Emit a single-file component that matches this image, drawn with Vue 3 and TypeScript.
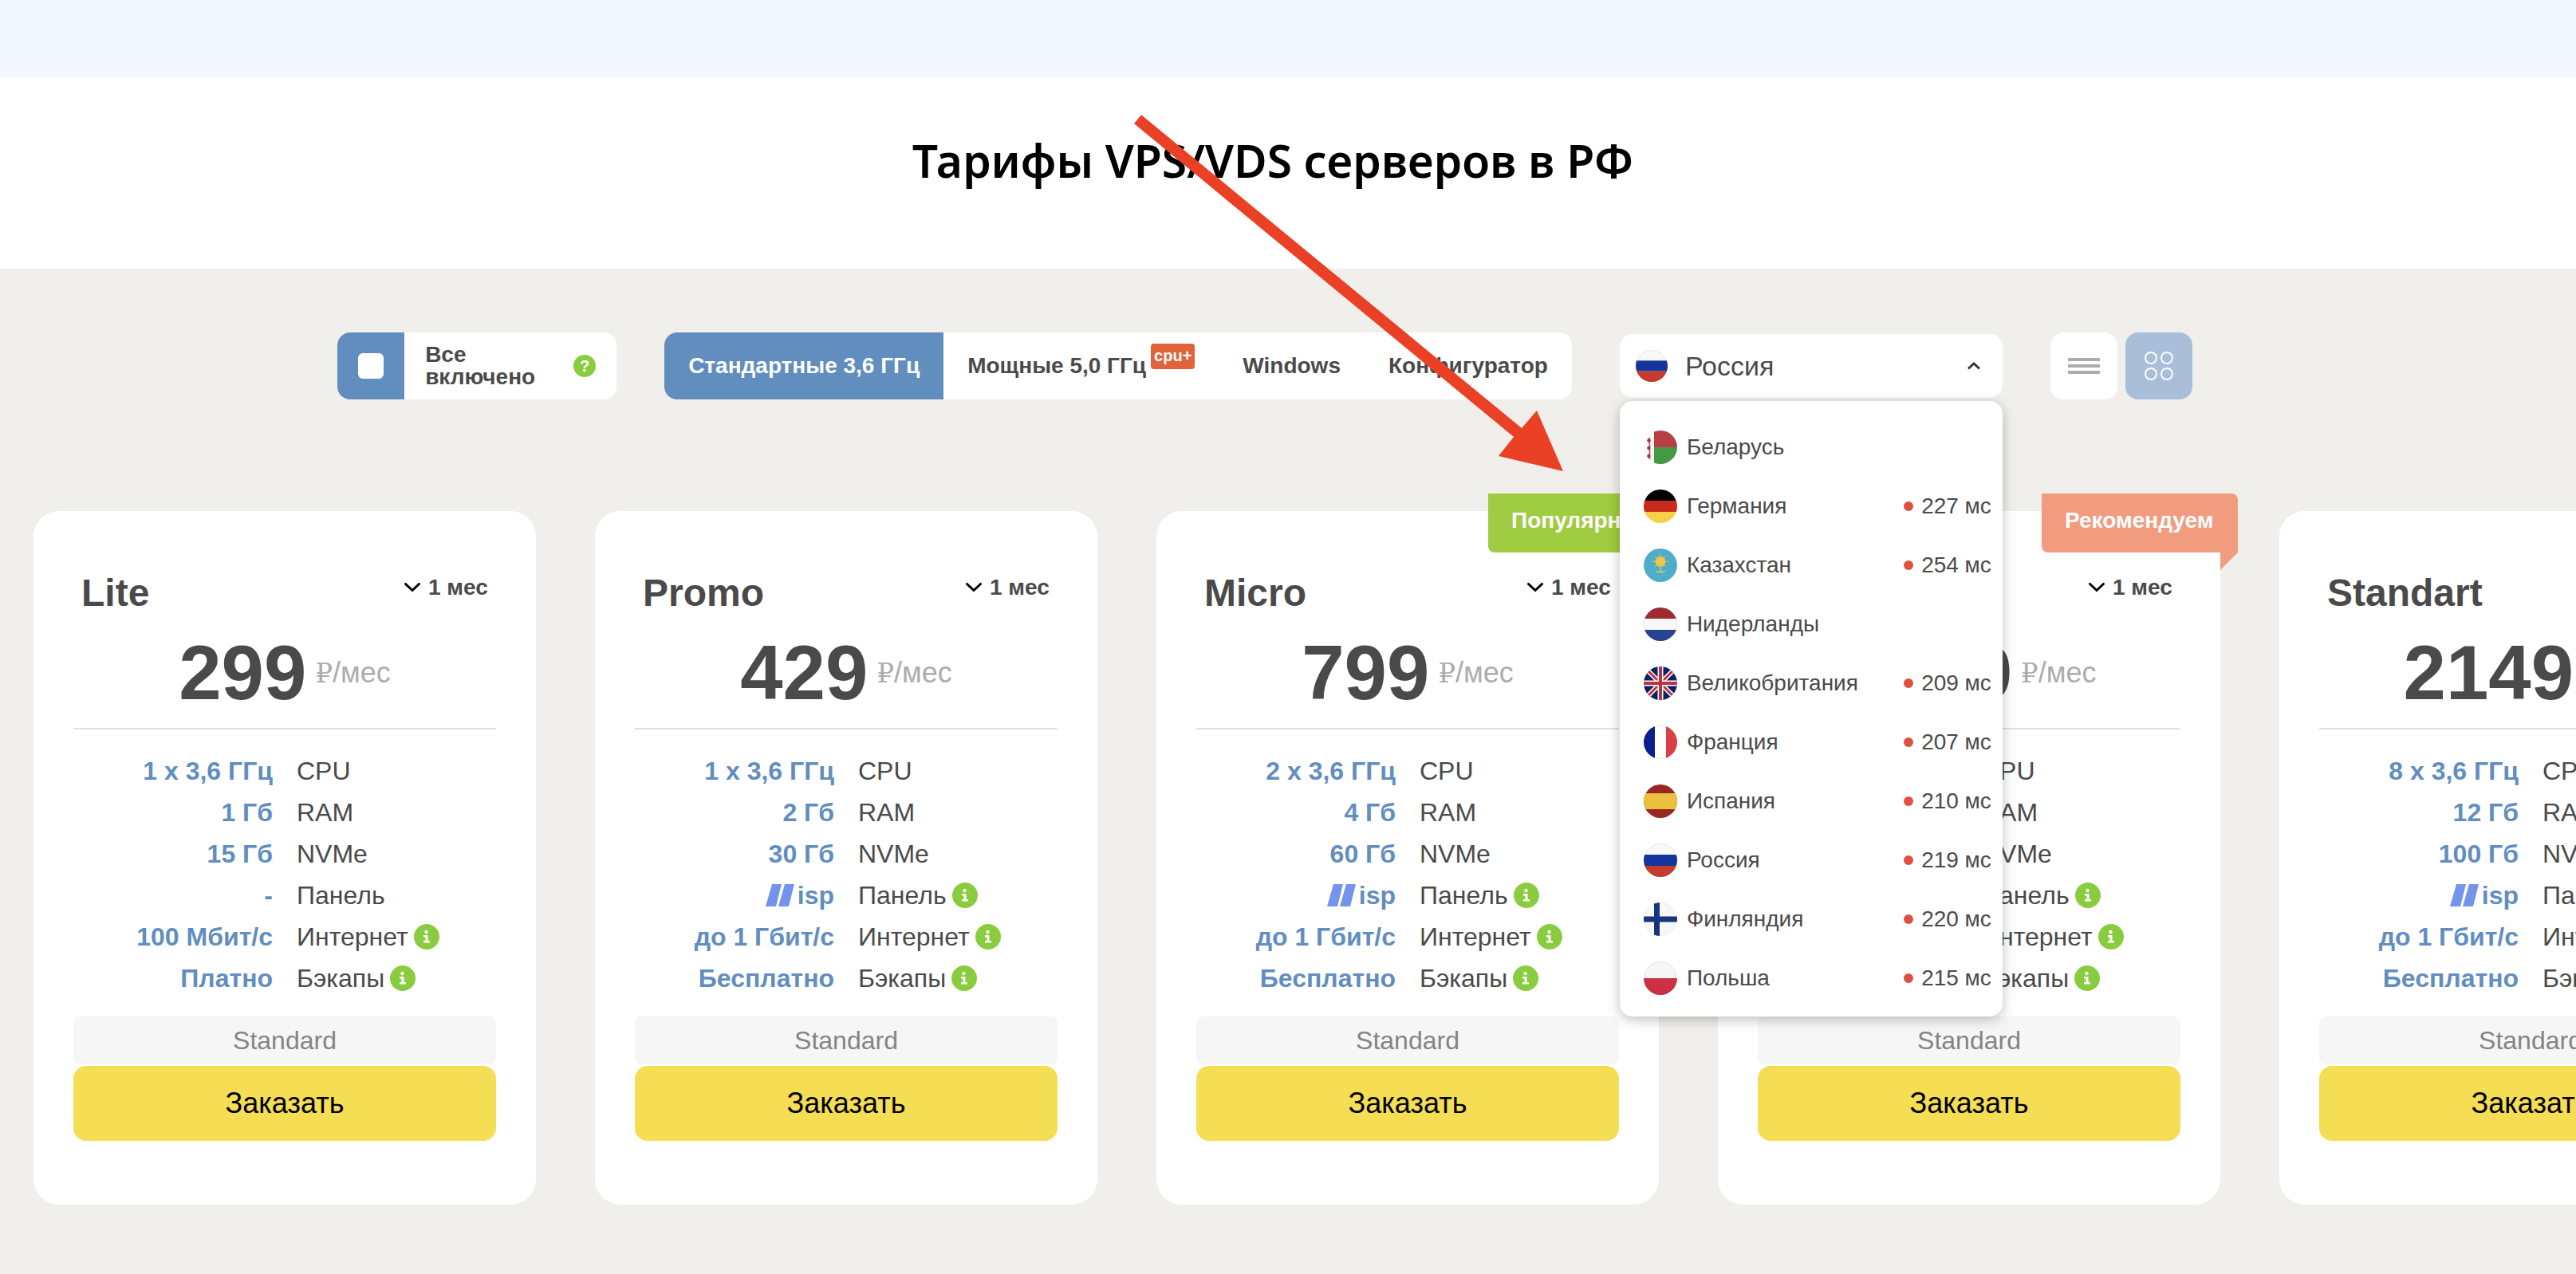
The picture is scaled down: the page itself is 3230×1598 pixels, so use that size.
<script setup lang="ts">
import { ref } from 'vue'

interface Country {
  code: string
  name: string
  ping?: number
}

interface Spec {
  label: string
  value: string
  logo?: boolean
  info?: boolean
}

interface Plan {
  name: string
  price: number
  specs: Spec[]
  ribbon?: { text: string; tone: string }
}

const tabs = [
  { id: 'std', label: 'Стандартные 3,6 ГГц' },
  { id: 'fast', label: 'Мощные 5,0 ГГц', badge: 'cpu+' },
  { id: 'win', label: 'Windows' },
  { id: 'conf', label: 'Конфигуратор' },
]

const countries: Country[] = [
  { code: 'by', name: 'Беларусь' },
  { code: 'de', name: 'Германия', ping: 227 },
  { code: 'kz', name: 'Казахстан', ping: 254 },
  { code: 'nl', name: 'Нидерланды' },
  { code: 'gb', name: 'Великобритания', ping: 209 },
  { code: 'fr', name: 'Франция', ping: 207 },
  { code: 'es', name: 'Испания', ping: 210 },
  { code: 'ru', name: 'Россия', ping: 219 },
  { code: 'fi', name: 'Финляндия', ping: 220 },
  { code: 'pl', name: 'Польша', ping: 215 },
]

function paidSpecs(cores: number, ram: number, disk: number): Spec[] {
  return [
    { label: 'CPU', value: `${cores} x 3,6 ГГц` },
    { label: 'RAM', value: `${ram} Гб` },
    { label: 'NVMe', value: `${disk} Гб` },
    { label: 'Панель', value: 'isp', logo: true, info: true },
    { label: 'Интернет', value: 'до 1 Гбит/с', info: true },
    { label: 'Бэкапы', value: 'Бесплатно', info: true },
  ]
}

const plans: Plan[] = [
  {
    name: 'Lite',
    price: 299,
    specs: [
      { label: 'CPU', value: '1 x 3,6 ГГц' },
      { label: 'RAM', value: '1 Гб' },
      { label: 'NVMe', value: '15 Гб' },
      { label: 'Панель', value: '-' },
      { label: 'Интернет', value: '100 Мбит/с', info: true },
      { label: 'Бэкапы', value: 'Платно', info: true },
    ],
  },
  { name: 'Promo', price: 429, specs: paidSpecs(1, 2, 30) },
  {
    name: 'Micro',
    price: 799,
    specs: paidSpecs(2, 4, 60),
    ribbon: { text: 'Популярный', tone: 'green' },
  },
  {
    name: 'Medium',
    price: 1499,
    specs: paidSpecs(4, 8, 80),
    ribbon: { text: 'Рекомендуем', tone: 'coral' },
  },
  { name: 'Standart', price: 2149, specs: paidSpecs(8, 12, 100) },
]

const activeTab = ref('std')
const country = ref<Country>(countries[7])
const open = ref(true)
const allInclusive = ref(false)
const view = ref<'list' | 'grid'>('grid')

function pick(item: Country) {
  country.value = item
  open.value = false
}
</script>

<template>
  <div class="page">
    <svg class="sprite" aria-hidden="true">
      <defs>
        <clipPath id="disc"><circle cx="21" cy="21" r="21" /></clipPath>
        <symbol id="flag-by" viewBox="0 0 42 42">
          <g clip-path="url(#disc)">
            <rect width="42" height="42" fill="#f7f5f5" />
            <rect x="13" width="29" height="21" fill="#b73e45" />
            <rect x="13" y="21" width="29" height="21" fill="#439944" />
            <path d="M7.500 9V36" stroke="#b5525c" stroke-width="1.500" />
            <path d="M6 9.500l3 3-3 3-2-3zM6 19l3 3-3 3-2-3zM6 29l3 3-3 3-2-3z" fill="#a93246" />
          </g>
        </symbol>
        <symbol id="flag-de" viewBox="0 0 42 42">
          <g clip-path="url(#disc)">
            <rect width="42" height="14" fill="#000" />
            <rect y="14" width="42" height="14" fill="#c92a1d" />
            <rect y="28" width="42" height="14" fill="#f8d048" />
          </g>
        </symbol>
        <symbol id="flag-kz" viewBox="0 0 42 42">
          <g clip-path="url(#disc)">
            <rect width="42" height="42" fill="#50adc7" />
            <path d="M21 6v21M11 16.500h20M14 9.500l14 14M28 9.500l-14 14" stroke="#d9c766" stroke-width="1" />
            <circle cx="21" cy="16.500" r="6.500" fill="#f0c546" />
            <path d="M15 27.500c2 2 4 2 6 1 2 1 4 1 6-1M17 30h8M21 24v5" fill="none" stroke="#c9cc72" stroke-width="1.200" />
          </g>
        </symbol>
        <symbol id="flag-nl" viewBox="0 0 42 42">
          <g clip-path="url(#disc)">
            <rect width="42" height="42" fill="#f8f8f8" />
            <rect width="42" height="14" fill="#9f2b30" />
            <rect y="28" width="42" height="14" fill="#27458c" />
          </g>
          <circle cx="21" cy="21" r="20.500" fill="none" stroke="#000" stroke-opacity="0.080" />
        </symbol>
        <symbol id="flag-gb" viewBox="0 0 42 42">
          <g clip-path="url(#disc)">
            <rect width="42" height="42" fill="#0c2163" />
            <path d="M0 0L42 42M42 0L0 42" stroke="#fff" stroke-width="6" />
            <path d="M0 0L42 42M42 0L0 42" stroke="#b93242" stroke-width="3" />
            <path d="M21 0V42M0 21H42" stroke="#fff" stroke-width="7" />
            <path d="M21 0V42M0 21H42" stroke="#b93242" stroke-width="4" />
          </g>
        </symbol>
        <symbol id="flag-fr" viewBox="0 0 42 42">
          <g clip-path="url(#disc)">
            <rect width="42" height="42" fill="#fff" />
            <rect width="14" height="42" fill="#0b1f8f" />
            <rect x="28" width="14" height="42" fill="#db4045" />
          </g>
          <circle cx="21" cy="21" r="20.500" fill="none" stroke="#000" stroke-opacity="0.080" />
        </symbol>
        <symbol id="flag-es" viewBox="0 0 42 42">
          <g clip-path="url(#disc)">
            <rect width="42" height="42" fill="#982720" />
            <rect y="11" width="42" height="20" fill="#e9c13f" />
          </g>
        </symbol>
        <symbol id="flag-ru" viewBox="0 0 42 42">
          <g clip-path="url(#disc)">
            <rect width="42" height="42" fill="#f8f8f8" />
            <rect y="14" width="42" height="14" fill="#15359c" />
            <rect y="28" width="42" height="14" fill="#c53c2c" />
          </g>
          <circle cx="21" cy="21" r="20.500" fill="none" stroke="#000" stroke-opacity="0.080" />
        </symbol>
        <symbol id="flag-fi" viewBox="0 0 42 42">
          <g clip-path="url(#disc)">
            <rect width="42" height="42" fill="#f7f7f7" />
            <path d="M16.500 0V42M0 21H42" stroke="#17357c" stroke-width="7" />
          </g>
          <circle cx="21" cy="21" r="20.500" fill="none" stroke="#000" stroke-opacity="0.050" />
        </symbol>
        <symbol id="flag-pl" viewBox="0 0 42 42">
          <g clip-path="url(#disc)">
            <rect width="42" height="42" fill="#f7f7f7" />
            <rect y="21" width="42" height="21" fill="#cc3042" />
          </g>
          <circle cx="21" cy="21" r="20.500" fill="none" stroke="#000" stroke-opacity="0.080" />
        </symbol>
        <symbol id="icon-info" viewBox="0 0 32 32">
          <circle cx="16" cy="16" r="16" fill="#8acc3f" />
          <circle cx="15.500" cy="10" r="2.200" fill="#fff" />
          <path d="M12 14h5.500v7H20v2.500h-8V21h2.500v-4.500H12z" fill="#fff" />
        </symbol>
      </defs>
    </svg>

    <div class="band"></div>

    <header class="intro">
      <h2>Тарифы VPS/VDS серверов в РФ</h2>
    </header>

    <main class="tariffs">
      <div class="controls">
        <label class="inclusive">
          <span class="inclusive-box"><input v-model="allInclusive" type="checkbox" /></span>
          <span class="inclusive-text">Все<br />включено</span>
          <span class="help">?</span>
        </label>

        <nav class="tabs">
          <button
            v-for="tab in tabs"
            :key="tab.id"
            type="button"
            class="tab"
            :class="{ active: tab.id === activeTab }"
            @click="activeTab = tab.id"
          >
            {{ tab.label }}<span v-if="tab.badge" class="badge">{{ tab.badge }}</span>
          </button>
        </nav>

        <div class="country">
          <button type="button" class="country-current" aria-haspopup="listbox" :aria-expanded="open" @click="open = !open">
            <svg class="flag-main"><use :href="`#flag-${country.code}`" /></svg>
            <span class="country-name">{{ country.name }}</span>
            <svg class="caret" viewBox="0 0 18 12"><path d="M2 9.500L9 3l7 6.500" fill="none" stroke="#333" stroke-width="3" /></svg>
          </button>
          <ul v-if="open" class="country-list" role="listbox">
            <li
              v-for="item in countries"
              :key="item.code"
              class="country-item"
              role="option"
              :aria-selected="item.code === country.code"
              @click="pick(item)"
            >
              <svg class="flag"><use :href="`#flag-${item.code}`" /></svg>
              <span>{{ item.name }}</span>
              <span v-if="item.ping" class="ping">{{ item.ping }} мс</span>
            </li>
          </ul>
        </div>

        <div class="views">
          <button type="button" class="view" :class="{ active: view === 'list' }" aria-label="Список" @click="view = 'list'">
            <svg width="40" height="20" viewBox="0 0 40 20"><path d="M0 2h40M0 10h40M0 18h40" stroke="#acacac" stroke-width="4" /></svg>
          </button>
          <button type="button" class="view" :class="{ active: view === 'grid' }" aria-label="Плитка" @click="view = 'grid'">
            <svg width="36" height="36" viewBox="0 0 36 36" fill="none" stroke="#fff" stroke-width="2">
              <circle cx="8" cy="8" r="7" /><circle cx="28" cy="8" r="7" />
              <circle cx="8" cy="28" r="7" /><circle cx="28" cy="28" r="7" />
            </svg>
          </button>
        </div>
      </div>

      <div class="plans">
        <article v-for="plan in plans" :key="plan.name" class="plan">
          <div v-if="plan.ribbon" class="ribbon" :class="plan.ribbon.tone">{{ plan.ribbon.text }}</div>
          <div class="plan-head">
            <h3>{{ plan.name }}</h3>
            <label class="period">
              <svg class="chevron" viewBox="0 0 20 12"><path d="M1.500 1.500L10 9.500l8.500-8" fill="none" stroke="#000" stroke-width="3" stroke-linecap="round" /></svg>
              <select :aria-label="`Период оплаты ${plan.name}`">
                <option>1 мес</option>
                <option>3 мес</option>
                <option>6 мес</option>
              </select>
            </label>
          </div>
          <div class="price">
            <strong>{{ plan.price }}</strong>
            <span class="unit"><span class="rouble">₽</span>/мес</span>
          </div>
          <table class="specs">
            <tbody>
              <tr v-for="spec in plan.specs" :key="spec.label">
                <td>
                  <span class="cell value">
                    <svg v-if="spec.logo" class="isp" viewBox="0 0 36 28"><path d="M8 0h12l-7 28H0zM24 0h12l-7 28H16z" fill="#7394ea" /></svg>{{ spec.value }}
                  </span>
                </td>
                <th scope="row">
                  <span class="cell">{{ spec.label }}<svg v-if="spec.info" class="info"><use href="#icon-info" /></svg></span>
                </th>
              </tr>
            </tbody>
          </table>
          <div class="grade">Standard</div>
          <button type="button" class="order">Заказать</button>
        </article>
      </div>
    </main>

    <svg class="arrow" viewBox="0 0 540 448" aria-hidden="true">
      <path d="M9 0L486 393L505 371L538 447L457 428L476 404L0 11z" fill="#ea4126" />
    </svg>
  </div>
</template>

<style>
body {
  margin: 0;
  background: #f0efeb;
}
</style>

<style scoped>
.page {
  position: relative;
  overflow: hidden;
  font-family: "Liberation Sans", Arial, sans-serif;
  color: #4a4a4a;
}

.page * {
  box-sizing: border-box;
}

button,
select {
  border: 0;
  margin: 0;
  padding: 0;
  background: none;
  color: inherit;
  font: inherit;
  cursor: pointer;
}

svg {
  flex: none;
  display: block;
}

.sprite {
  position: absolute;
  width: 0;
  height: 0;
}

.band {
  height: 97px;
  background: #f3f7ff;
}

.intro {
  padding: 64px 38px 96px 0;
  background: #fff;
}

.intro h2 {
  margin: 0;
  font: 600 57px/80px "Noto Sans", sans-serif;
  color: #000;
  text-align: center;
}

.tariffs {
  padding: 80px 0 86px;
  background: #f0efeb;
}

.controls {
  display: flex;
  justify-content: center;
  align-items: center;
  gap: 60px;
  padding-right: 58px;
}

.inclusive {
  display: flex;
  align-items: center;
  width: 350px;
  height: 84px;
  padding-right: 26px;
  border-radius: 16px;
  overflow: hidden;
  background: #fff;
  font-weight: 700;
  font-size: 28px;
  line-height: 28px;
}

.inclusive-box {
  display: flex;
  align-items: center;
  justify-content: center;
  width: 84px;
  height: 84px;
  background: #618ebf;
}

.inclusive-box input {
  appearance: none;
  width: 32px;
  height: 32px;
  margin: 0;
  border-radius: 6px;
  background: #fff;
}

.inclusive-box input:checked {
  border: 8px solid #fff;
  background: #618ebf;
}

.inclusive-text {
  flex: 1;
  padding-left: 26px;
}

.help {
  width: 28px;
  height: 28px;
  border-radius: 50%;
  background: #8acc3f;
  color: #fff;
  font-size: 20px;
  text-align: center;
}

.tabs {
  display: flex;
  height: 84px;
  border-radius: 16px;
  overflow: hidden;
  background: #fff;
}

.tab {
  display: flex;
  align-items: center;
  padding: 0 30px;
  font-weight: 700;
  font-size: 28px;
  white-space: nowrap;
}

.tab.active {
  background: #618ebf;
  color: #fff;
}

.badge {
  align-self: flex-start;
  margin: 14px 0 0 6px;
  padding: 0 4px 2px;
  border-radius: 4px;
  background: #e0633c;
  color: #fff;
  font-size: 20px;
  line-height: 30px;
}

.country {
  position: relative;
  width: 480px;
}

.country-current {
  display: flex;
  align-items: center;
  width: 100%;
  height: 80px;
  padding: 0 27px 0 20px;
  border-radius: 16px;
  background: #fff;
  font-size: 34px;
  text-align: left;
}

.flag-main {
  width: 40px;
  height: 40px;
}

.country-name {
  flex: 1;
  padding-left: 22px;
}

.caret {
  width: 18px;
  height: 12px;
}

.country-list {
  position: absolute;
  z-index: 2;
  top: calc(100% + 4px);
  left: 0;
  width: 100%;
  margin: 0;
  padding: 21px 0 11px;
  border-radius: 16px;
  background: #fff;
  box-shadow: 0 4px 16px rgba(0, 0, 0, 0.25);
  list-style: none;
}

.country-item {
  display: flex;
  align-items: center;
  gap: 12px;
  height: 74px;
  padding: 0 14px 0 30px;
  font-size: 28px;
  cursor: pointer;
}

.flag {
  width: 42px;
  height: 42px;
}

.ping {
  display: flex;
  align-items: center;
  gap: 10px;
  margin-left: auto;
}

.ping::before {
  content: "";
  width: 12px;
  height: 12px;
  border-radius: 50%;
  background: #e0503f;
}

.views {
  display: flex;
  gap: 10px;
}

.view {
  display: flex;
  align-items: center;
  justify-content: center;
  width: 84px;
  height: 84px;
  border-radius: 16px;
  background: #fff;
}

.view.active {
  background: #a8bed9;
}

.plans {
  display: flex;
  gap: 74px;
  margin-top: 140px;
  padding-left: 42px;
}

.plan {
  position: relative;
  flex: none;
  width: 630px;
  padding: 75px 50px 80px;
  border-radius: 32px;
  background: #fff;
}

.ribbon {
  position: absolute;
  top: -22px;
  right: -22px;
  width: 246px;
  padding-left: 29px;
  border-radius: 0 8px 0 8px;
  color: #fff;
  font-weight: 700;
  font-size: 28px;
  line-height: 68px;
  height: 74px;
}

.ribbon::after {
  content: "";
  position: absolute;
  top: 100%;
  right: 0;
  width: 22px;
  height: 22px;
  background: inherit;
  clip-path: polygon(0 0, 100% 0, 0 100%);
}

.ribbon.green {
  width: 236px;
  background: #9fcc41;
}

.ribbon.coral {
  background: #f19c7f;
}

/* The ribbon folds over the card's upper right corner. */
.plan:has(.ribbon) {
  border-top-right-radius: 0;
}

.plan-head {
  display: flex;
  justify-content: space-between;
  align-items: flex-start;
  padding: 0 10px;
}

.plan-head h3 {
  margin: 0;
  font-size: 48px;
  line-height: 56px;
}

.period {
  display: flex;
  align-items: center;
  gap: 10px;
  margin-top: 5px;
}

.period select {
  appearance: none;
  height: 32px;
  font-weight: 700;
  font-size: 28px;
  line-height: 32px;
}

.chevron {
  width: 20px;
  height: 12px;
}

.price {
  display: flex;
  align-items: center;
  justify-content: center;
  gap: 11px;
  padding: 24px 0 21px;
  border-bottom: 2px solid #e0e0e0;
}

.price strong {
  font-size: 96px;
  line-height: 96px;
}

.unit {
  font-size: 36px;
  line-height: 40px;
  color: #acacac;
}

.rouble {
  font-family: "DejaVu Serif", serif;
  font-size: 34px;
}

.specs {
  width: 100%;
  margin: 26px 0 22px;
  border-spacing: 0;
  table-layout: fixed;
  font-size: 32px;
  line-height: 52px;
}

.specs td,
.specs th {
  padding: 0 0 0 15px;
  font-weight: 400;
  text-align: left;
}

.specs td {
  padding: 0 15px 0 0;
}

.cell {
  display: flex;
  align-items: center;
  gap: 7px;
  height: 52px;
  white-space: nowrap;
}

.value {
  justify-content: flex-end;
  gap: 4px;
  color: #618ebf;
  font-weight: 700;
}

.isp {
  width: 36px;
  height: 28px;
}

.info {
  width: 32px;
  height: 32px;
}

.grade {
  border-radius: 8px;
  background: #f6f6f6;
  color: #848484;
  font-size: 32px;
  line-height: 60px;
  text-align: center;
}

.order {
  width: 100%;
  height: 94px;
  margin-top: 2px;
  border-radius: 16px;
  background: #f5de53;
  color: #000;
  font-size: 36px;
}

.arrow {
  position: absolute;
  z-index: 3;
  top: 144px;
  left: 1422px;
  width: 540px;
  height: 448px;
  pointer-events: none;
}
</style>
